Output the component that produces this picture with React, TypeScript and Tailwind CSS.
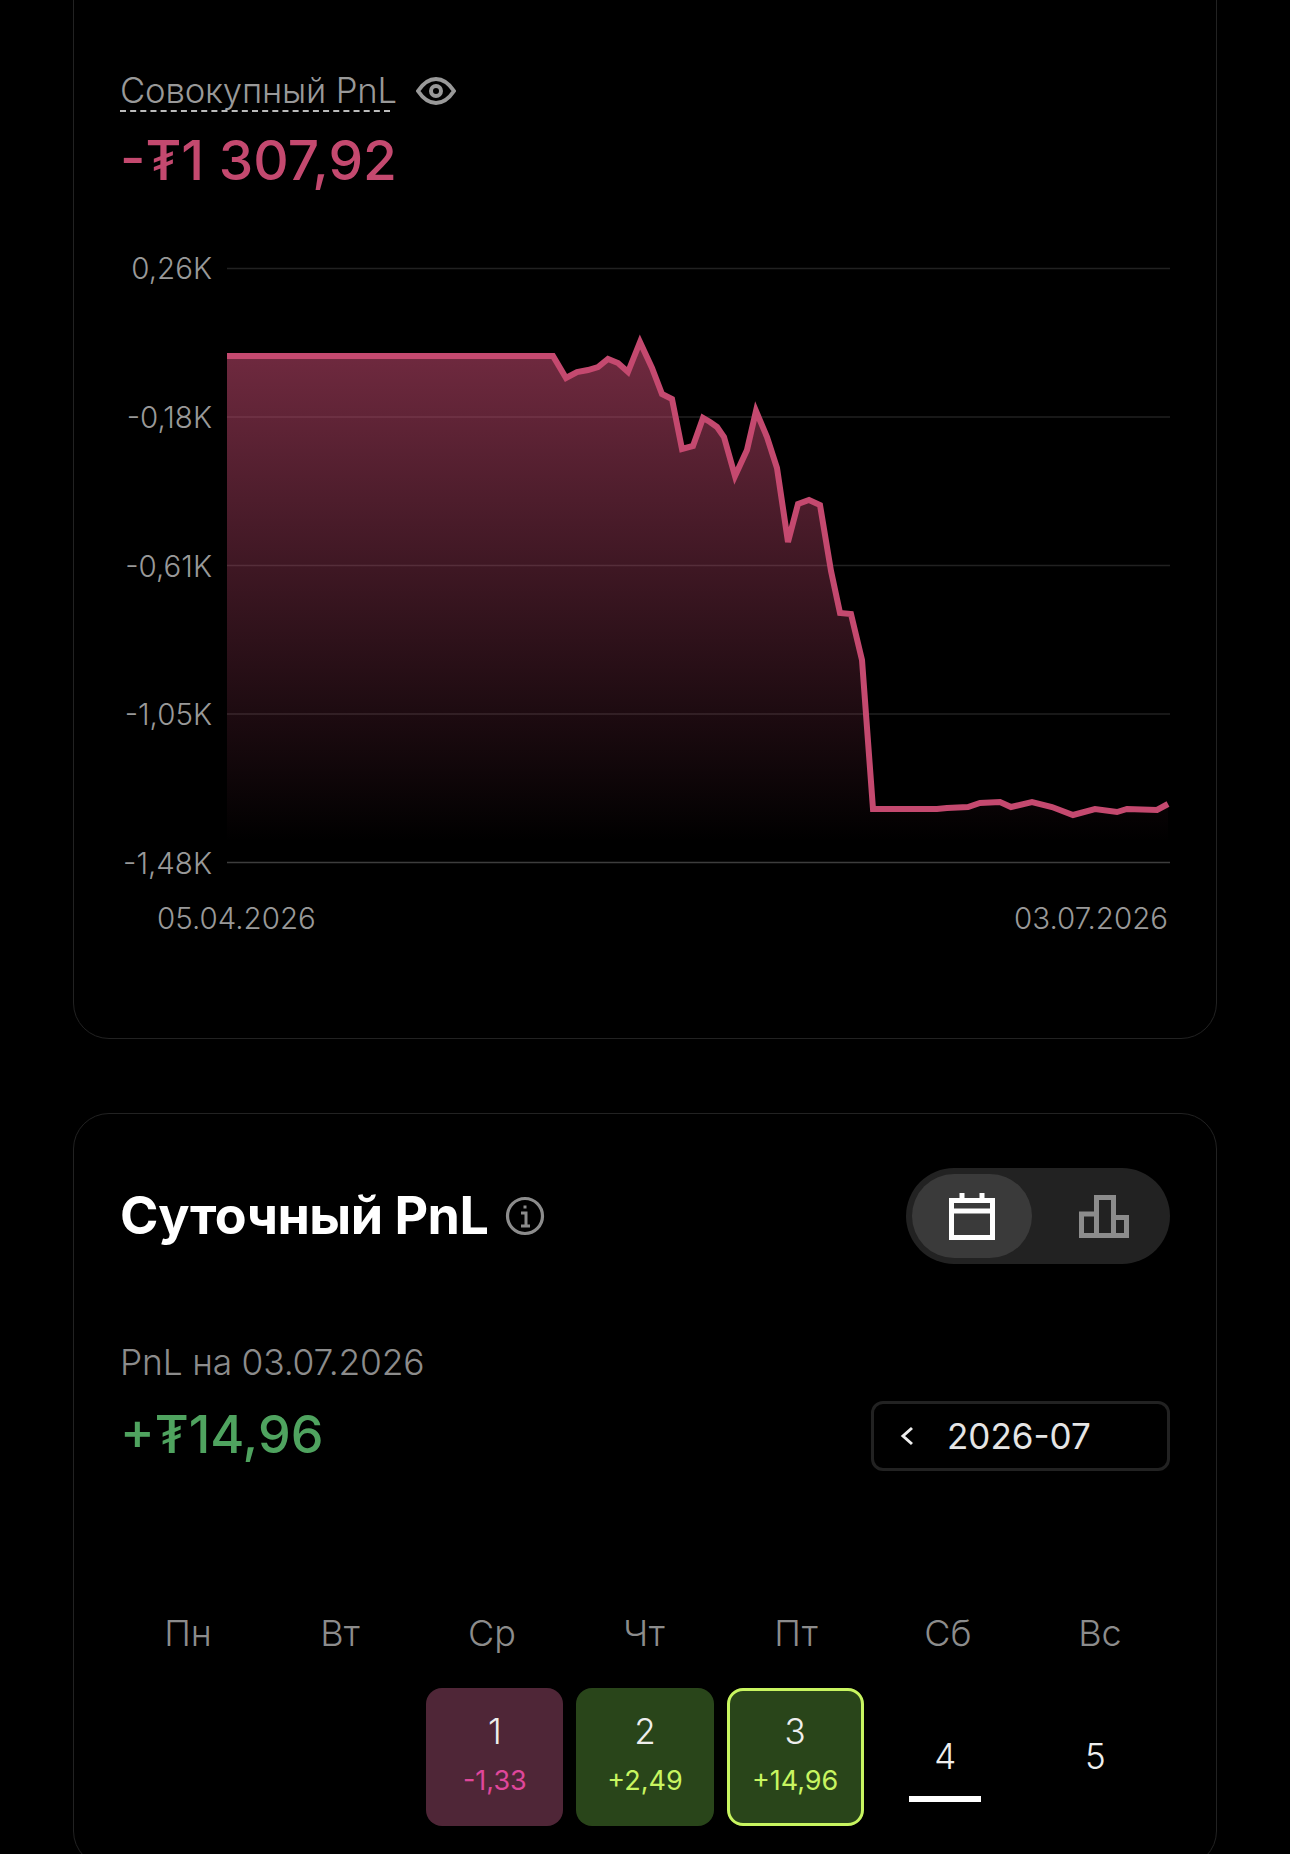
const pts: [number, number][] = [
  [227, 356], [553, 356], [566, 378], [577, 372], [588, 370], [598, 367], [608, 359], [618, 363], [628, 372], [640, 342],
  [652, 368], [662, 394], [672, 399], [682, 449], [693, 446], [703, 418], [710, 422], [717, 427], [724, 437], [735, 476],
  [747, 450], [756, 411], [767, 437], [777, 468], [788, 542], [798, 504], [809, 500], [820, 505], [831, 571], [840, 613],
  [851, 614], [862, 660], [873, 809], [937, 809], [947, 808], [968, 807], [980, 803], [1000, 802], [1011, 807], [1032, 802],
  [1052, 807], [1073, 815], [1095, 809], [1117, 812], [1127, 809], [1157, 810], [1168, 804],
];
const line = pts.map((p, i) => `${i ? "L" : "M"}${p[0]} ${p[1]}`).join(" ");
const area = `${line} L1168 842 L227 842 Z`;
const gridY = [268.5, 417, 565.5, 714, 862.5];
const yLabels = ["0,26K", "-0,18K", "-0,61K", "-1,05K", "-1,48K"];
const weekdays = ["Пн", "Вт", "Ср", "Чт", "Пт", "Сб", "Вс"];

function Chart() {
  return (
    <svg className="block w-[943px] h-[625px]" viewBox="227 253 943 625">
      <defs>
        <linearGradient id="fade" gradientUnits="userSpaceOnUse" x1="0" y1="342" x2="0" y2="842">
          <stop offset="0" stopColor="#c4496f" stopOpacity="0.58" />
          <stop offset="1" stopColor="#c4496f" stopOpacity="0" />
        </linearGradient>
      </defs>
      {gridY.map((y, i) => (
        <line key={y} x1="227" x2="1170" y1={y} y2={y} stroke={i === 4 ? "#3d3d3d" : "#212121"} strokeWidth="1.5" />
      ))}
      <path d={area} fill="url(#fade)" />
      <path d={line} fill="none" stroke="#c4496f" strokeWidth="6" strokeLinejoin="miter" />
    </svg>
  );
}

function Cell({ n, v, tone, selected }: { n: string; v: string; tone: "red" | "green"; selected?: boolean }) {
  return (
    <div
      className={
        "h-[138px] rounded-[16px] flex flex-col items-center " +
        (tone === "red" ? "bg-[#4f2637] " : "bg-[#29451a] ") +
        (selected ? "border-[3px] border-[#c8f560] pt-[20px]" : "pt-[23px]")
      }
    >
      <span className="text-[35px] leading-[40px] font-light text-[#eeeeee]">{n}</span>
      <span className={"mt-[14px] text-[27px] leading-[32px] " + (tone === "red" ? "text-[#e0479b]" : "text-[#c8f560]")}>{v}</span>
    </div>
  );
}

export default function App() {
  return (
    <div className="h-[1854px] overflow-hidden bg-black font-['Inter',sans-serif]">
      <section className="mx-[73px] mt-[-40px] h-[1079px] rounded-[36px] border border-[#222222] px-[46px] pt-[105px]">
        <div className="flex items-center h-[50px]">
          <span className="border-b-2 border-dashed border-[#bbbbbb]">
            <span className="inline-block mr-[-7px] text-[34.7px] leading-[40px] font-light text-[#999999] tracking-[-0.2px]">Совокупный PnL</span>
          </span>
          <svg className="ml-[26px]" width="40" height="30" viewBox="0 0 40 30" fill="none" stroke="#999999" strokeWidth="4">
            <path d="M2 15 C8 6 14 3 20 3 C26 3 32 6 38 15 C32 24 26 27 20 27 C14 27 8 24 2 15 Z" />
            <circle cx="20" cy="15" r="5" />
          </svg>
        </div>
        <div className="mt-[13px] text-[55px] leading-[62px] font-medium text-[#c4496f]">-₮1 307,92</div>
        <div className="mt-[62px] flex">
          <div className="w-[92px] shrink-0 h-[625px] flex flex-col justify-between items-end text-[29.5px] leading-[30px] font-light text-[#999999]">
            {yLabels.map((l) => (
              <span key={l}>{l}</span>
            ))}
          </div>
          <div className="ml-[15px]">
            <Chart />
          </div>
        </div>
        <div className="mt-[24px] flex justify-between pl-[37px] pr-[2px] text-[29.5px] leading-[32px] font-light text-[#999999]">
          <span>05.04.2026</span>
          <span>03.07.2026</span>
        </div>
      </section>

      <section className="mx-[73px] mt-[74px] rounded-[36px] border border-[#222222] px-[46px] pt-[54px] pb-[40px]">
        <div className="flex items-center justify-between h-[96px]">
          <div className="flex items-center">
            <h2 className="text-[52px] leading-[60px] font-bold text-white tracking-[-0.5px]">Суточный PnL</h2>
            <svg className="ml-[17px]" width="40" height="40" viewBox="0 0 40 40" fill="none" stroke="#8c8c8c">
              <circle cx="20" cy="20" r="17.5" strokeWidth="3.2" />
              <path d="M16 17 H21 V30 M16 30 H25" strokeWidth="3" />
              <rect x="18.5" y="9.5" width="3" height="3" fill="#8c8c8c" stroke="none" />
            </svg>
          </div>
          <div className="w-[264px] h-[96px] rounded-full bg-[#222222] p-[6px] flex items-center">
            <div className="w-[120px] h-[84px] rounded-full bg-[#3a3a3a] flex items-center justify-center">
              <svg width="46" height="47" viewBox="0 0 46 47" fill="none" stroke="#ffffff" strokeWidth="5">
                <path d="M2.5 7.5 H43.5 V44.5 H2.5 Z" />
                <path d="M0 18 H46" />
                <path d="M13 0 V6 M33 0 V6" />
              </svg>
            </div>
            <div className="flex-1 flex items-center justify-center pl-[12px]">
              <svg width="50" height="43" viewBox="0 0 50 43" fill="none" stroke="#8c8c8c" strokeWidth="5">
                <path d="M2.5 40.5 V19 H17.5 V40.5 Z" />
                <path d="M17.5 40.5 V2.5 H34.5 V40.5 Z" />
                <path d="M34.5 22.5 H47.5 V40.5 H34.5" />
              </svg>
            </div>
          </div>
        </div>

        <div className="mt-[76px] flex items-end justify-between">
          <div>
            <div className="text-[35.4px] leading-[46px] font-light text-[#8c8c8c] tracking-[-0.2px]">PnL на 03.07.2026</div>
            <div className="mt-[18px] text-[52px] leading-[62px] font-medium text-[#4fa35f]">+₮14,96</div>
          </div>
          <div className="w-[299px] h-[70px] mb-[-5px] rounded-[12px] border-[3px] border-[#222222] flex items-center pl-[26px]">
            <svg width="14" height="20" viewBox="0 0 14 20" fill="none" stroke="#eeeeee" strokeWidth="3">
              <path d="M12 2 L3 10 L12 18" />
            </svg>
            <span className="ml-[33px] text-[35px] leading-[44px] text-[#e5e5e5]">2026-07</span>
          </div>
        </div>

        <div className="mt-[147px] ml-[-8px] mr-[-6px] grid grid-cols-7 text-center text-[36px] leading-[40px] font-light text-[#8c8c8c]">
          {weekdays.map((d) => (
            <span key={d}>{d}</span>
          ))}
        </div>

        <div className="mt-[35px] grid grid-cols-7 gap-[13px] px-[6px]">
          <div />
          <div />
          <Cell n="1" v="-1,33" tone="red" />
          <Cell n="2" v="+2,49" tone="green" />
          <Cell n="3" v="+14,96" tone="green" selected />
          <div className="h-[138px] flex flex-col items-center pt-[48px]">
            <span className="text-[35px] leading-[40px] font-light text-[#eeeeee]">4</span>
            <span className="mt-[20px] w-[72px] h-[6px] bg-white" />
          </div>
          <div className="h-[138px] flex flex-col items-center pt-[48px]">
            <span className="text-[35px] leading-[40px] font-light text-[#eeeeee]">5</span>
          </div>
        </div>
      </section>
    </div>
  );
}
